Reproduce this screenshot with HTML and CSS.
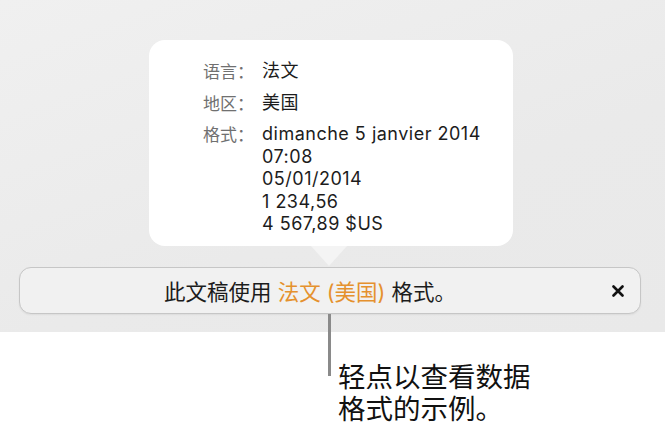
FILE: index.html
```html
<!DOCTYPE html>
<html lang="zh-CN">
<head>
<meta charset="utf-8">
<link rel="stylesheet" href="styles.css">
</head>
<body>
<div class="page">
  <div class="stage">
    <div class="popover">
      <div class="grid">
        <div class="label">语言：</div>
        <div class="value">法文</div>
        <div class="label">地区：</div>
        <div class="value">美国</div>
        <div class="label">格式：</div>
        <div class="value">dimanche 5 janvier 2014<br>07:08<br>05/01/2014<br>1 234,56<br>4 567,89 $US</div>
      </div>
      <div class="arrow"></div>
    </div>
    <div class="bar">
      <div class="bar-text">此文稿使用 <span class="accent">法文 (美国)</span> 格式。</div>
      <div class="close">
        <svg width="12" height="12" viewBox="0 0 12 12"><path d="M1.5 1.5 L10.5 10.5 M10.5 1.5 L1.5 10.5" stroke="#111" stroke-width="2.6" stroke-linecap="round"/></svg>
      </div>
    </div>
  </div>
  <div class="note">
    <div class="leader"></div>
    <div class="note-text">轻点以查看数据<br>格式的示例。</div>
  </div>
</div>
</body>
</html>
```

FILE: styles.css
```css
html, body {
  margin: 0;
  padding: 0;
  background: #ffffff;
}
.page {
  width: 668px;
  height: 428px;
  overflow: hidden;
  font-family: Inter, "Noto Sans CJK SC", sans-serif;
  color: #1a1a1a;
}
.stage {
  width: 665px;
  height: 332px;
  box-sizing: border-box;
  padding-top: 40px;
  background: linear-gradient(160deg, #f0f0f0 0%, #eaeaea 60%, #e9e9e9 100%);
  display: flex;
  flex-direction: column;
}
.popover {
  position: relative;
  margin-left: 149px;
  width: 364px;
  height: 206px;
  box-sizing: border-box;
  background: #ffffff;
  border-radius: 16px;
  padding: 20px 0 0 54px;
}
.grid {
  display: grid;
  grid-template-columns: auto auto;
  column-gap: 8px;
  row-gap: 9px;
  justify-content: start;
  line-height: 22.5px;
}
.label {
  color: #707070;
  font-size: 17px;
  font-family: "Noto Sans CJK SC", sans-serif;
}
.value {
  color: #1c1c1c;
  font-size: 18px;
  letter-spacing: 0.5px;
  font-family: Inter, "Noto Sans CJK SC", sans-serif;
}
.arrow {
  position: absolute;
  left: 162px;
  top: 206px;
  width: 0;
  height: 0;
  border-left: 18.5px solid transparent;
  border-right: 18.5px solid transparent;
  border-top: 20px solid #f4f4f4;
}
.bar {
  margin: 21px 0 0 19px;
  width: 622px;
  height: 47px;
  box-sizing: border-box;
  border: 1.5px solid #c6c6c6;
  border-radius: 12px;
  background: #f1f1f1;
  box-shadow: 0 1px 2px rgba(0,0,0,0.06);
  display: flex;
  align-items: center;
}
.bar-text {
  flex: 1;
  text-align: center;
  padding-right: 40px;
  font-size: 21.5px;
  font-family: Inter, "Noto Sans CJK SC", sans-serif;
  color: #1c1c1c;
}
.accent {
  color: #e5912e;
}
.close {
  width: 0;
  position: relative;
  display: flex;
  align-items: center;
}
.close svg {
  position: absolute;
  left: -28px;
  top: -6px;
}
.note {
  position: relative;
  padding: 27px 0 0 338px;
}
.leader {
  position: absolute;
  left: 328px;
  top: -18px;
  width: 3px;
  height: 62px;
  background: #8a8a8a;
}
.note-text {
  font-family: "Noto Sans CJK SC", sans-serif;
  font-size: 27.5px;
  line-height: 32px;
  color: #111111;
}
```
